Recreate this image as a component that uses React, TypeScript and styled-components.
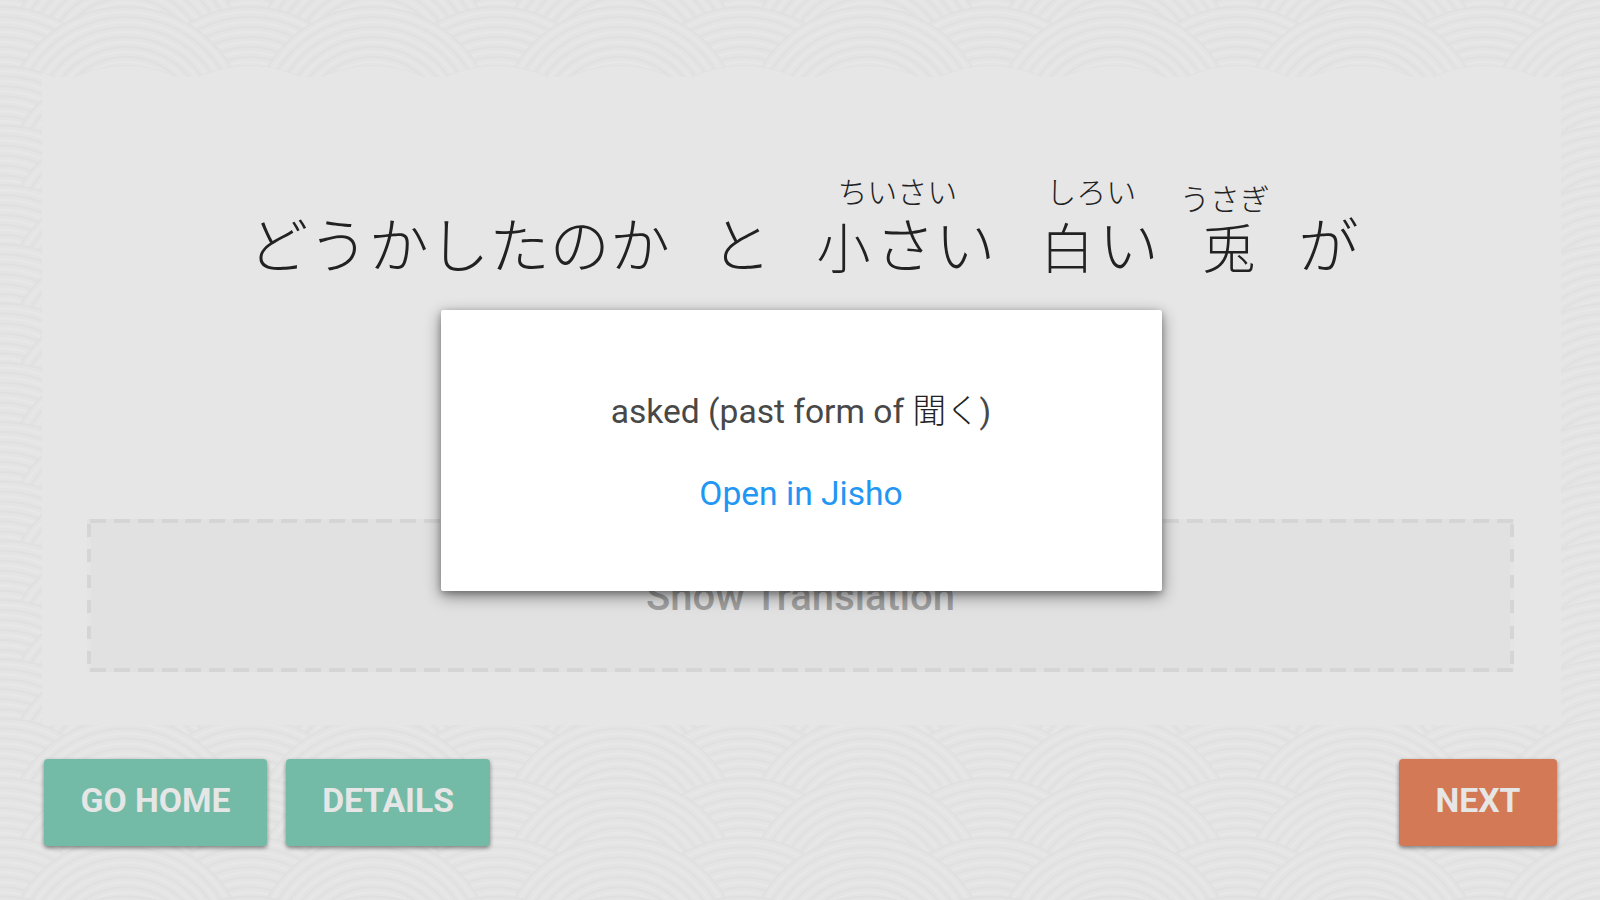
import React from "react";
import styled, { createGlobalStyle } from "styled-components";

const Global = createGlobalStyle`
  html, body { margin: 0; padding: 0; background: #e5e5e5; }
  * { box-sizing: border-box; }
`;

const Screen = styled.div`
  position: relative;
  width: 1600px;
  height: 900px;
  overflow: hidden;
  isolation: isolate;
  display: flex;
  flex-direction: column;
  padding: 77px 39px 0 42px;
  font-family: Roboto, "Noto Sans CJK JP", sans-serif;
`;

const Backdrop = styled.svg`
  position: absolute;
  inset: 0;
  z-index: -1;
`;

const Panel = styled.main`
  display: flex;
  flex-direction: column;
  justify-content: space-between;
  height: 648px;
  padding: 94px 47px 53px 45px;
  background: #e6e6e6;
`;

const Sentence = styled.div`
  display: flex;
  padding-left: 161px;
  font-family: "Noto Sans CJK JP", sans-serif;
  font-weight: 300;
  color: #222;
`;

const Word = styled.div<{ $before?: number }>`
  display: flex;
  flex-direction: column;
  align-items: flex-start;
  margin-left: ${(p) => p.$before ?? 0}px;
`;

const Reading = styled.span<{ $shift?: number; $drop?: number }>`
  height: 41px;
  margin-left: ${(p) => p.$shift ?? 0}px;
  margin-right: -60px;
  padding-top: ${(p) => p.$drop ?? 0}px;
  font-size: 30px;
  line-height: 39px;
  white-space: nowrap;
`;

const Base = styled.span`
  display: flex;
  font-size: 60.3px;
  line-height: 60px;
  white-space: nowrap;
`;

const Kanji = styled.span`
  width: 60.3px;
  padding: 4px 0 0 2px;
  font-size: 54px;
`;

const Translation = styled.button`
  display: flex;
  justify-content: center;
  align-items: center;
  height: 153px;
  padding: 2px 0 0;
  border: 0;
  font: 500 40px/50px Roboto, sans-serif;
  color: #9f9f9f;
  background:
    repeating-linear-gradient(90deg, #d5d5d5 0 16px, transparent 16px 23.85px) 3px 0 / 100% 4px no-repeat,
    repeating-linear-gradient(90deg, #d5d5d5 0 16px, transparent 16px 23.85px) 3px 100% / 100% 4px no-repeat,
    repeating-linear-gradient(180deg, #d5d5d5 0 13px, #e4e4e4 13px 25.5px) 0 5px / 4px 100% no-repeat,
    repeating-linear-gradient(180deg, #d5d5d5 0 13px, #e4e4e4 13px 25.5px) 100% 5px / 4px 100% no-repeat,
    #e1e1e1;
`;

const Actions = styled.nav`
  display: flex;
  gap: 19px;
  margin-top: 34px;
  padding: 0 4px 0 2px;
`;

const ActionButton = styled.button<{ $width: number; $accent?: boolean }>`
  width: ${(p) => p.$width}px;
  height: 87px;
  margin-left: ${(p) => (p.$accent ? "auto" : "0")};
  padding: 0 0 4px;
  border: 0;
  border-radius: 4px;
  background: ${(p) => (p.$accent ? "#d37956" : "#73bba6")};
  color: #e6e6e6;
  font: 700 33.7px/40px Roboto, sans-serif;
  white-space: nowrap;
  box-shadow: 0 2px 4px rgba(0, 0, 0, 0.45);
`;

const Dialog = styled.section`
  position: absolute;
  left: 441px;
  top: 310px;
  width: 721px;
  height: 281px;
  display: flex;
  flex-direction: column;
  align-items: center;
  gap: 42px;
  padding: 82px 1px 0 0;
  border-radius: 2px;
  background: #fff;
  box-shadow: 0 5px 16px rgba(0, 0, 0, 0.45), 0 2px 6px rgba(0, 0, 0, 0.25);
`;

const Meaning = styled.p`
  margin: 0;
  font-size: 33.6px;
  line-height: 40px;
  color: #484848;
  white-space: nowrap;
`;

const Japanese = styled.span`
  font-family: "Noto Sans CJK JP", sans-serif;
  font-weight: 300;
  line-height: 1;
  color: #222;
`;

const JishoLink = styled.a`
  font-size: 33.6px;
  line-height: 40px;
  color: #2196f3;
  white-space: nowrap;
`;

const PERIOD = 247;
const ROW = 59.3;
const RADIUS = 121;
const rings = [0, 1, 2, 3, 4, 5, 6];

const Wave = ({ x, y }: { x: number; y: number }) => (
  <g transform={`translate(${x} ${y + RADIUS})`} fill="none">
    <circle r={RADIUS} fill="#e4e4e4" />
    {rings.map((i) => (
      <g key={i}>
        <circle r={RADIUS - 4 - i * 10} stroke="#e7e7e7" strokeWidth="2.5" />
        <circle r={RADIUS + 1 - i * 10} stroke="#e0e0e0" strokeWidth="2" />
      </g>
    ))}
  </g>
);

const Waves = () => (
  <Backdrop width="1600" height="900" viewBox="0 0 1600 900">
    {Array.from({ length: 18 }, (_, row) => {
      const y = 8 + (row - 2) * ROW;
      return (
        <g key={row}>
          {Array.from({ length: 8 }, (_, i) => (
            <Wave key={i} x={2.5 + i * PERIOD} y={y} />
          ))}
          {Array.from({ length: 8 }, (_, i) => (
            <Wave key={i} x={126 + (i - 1) * PERIOD} y={y} />
          ))}
        </g>
      );
    })}
    {/* Scalloped upper edge of the panel */}
    <clipPath id="panel-edge">
      <rect x="42" y="60" width="1519" height="20" />
    </clipPath>
    <g clipPath="url(#panel-edge)" fill="#e6e6e6">
      {Array.from({ length: 14 }, (_, i) => (
        <circle key={i} cx={2.5 + (i * PERIOD) / 2} cy={66 + RADIUS} r={RADIUS} />
      ))}
    </g>
  </Backdrop>
);

export default function App() {
  return (
    <Screen>
      <Global />
      <Waves />
      <Panel>
        <Sentence>
          <Word>
            <Reading />
            <Base>どうかしたのか</Base>
          </Word>
          <Word $before={41}>
            <Reading />
            <Base>と</Base>
          </Word>
          <Word $before={43}>
            <Reading $shift={23}>ちいさい</Reading>
            <Base><Kanji>小</Kanji>さい</Base>
          </Word>
          <Word $before={43}>
            <Reading $shift={8}>しろい</Reading>
            <Base><Kanji>白</Kanji>い</Base>
          </Word>
          <Word $before={41}>
            <Reading $shift={-20} $drop={7}>うさぎ</Reading>
            <Base><Kanji>兎</Kanji></Base>
          </Word>
          <Word $before={38}>
            <Reading />
            <Base>が</Base>
          </Word>
        </Sentence>
        <Translation>Show Translation</Translation>
      </Panel>
      <Actions>
        <ActionButton $width={223}>GO HOME</ActionButton>
        <ActionButton $width={204}>DETAILS</ActionButton>
        <ActionButton $width={158} $accent>NEXT</ActionButton>
      </Actions>
      <Dialog>
        <Meaning>
          asked (past form of <Japanese>聞く</Japanese>)
        </Meaning>
        <JishoLink>Open in Jisho</JishoLink>
      </Dialog>
    </Screen>
  );
}
